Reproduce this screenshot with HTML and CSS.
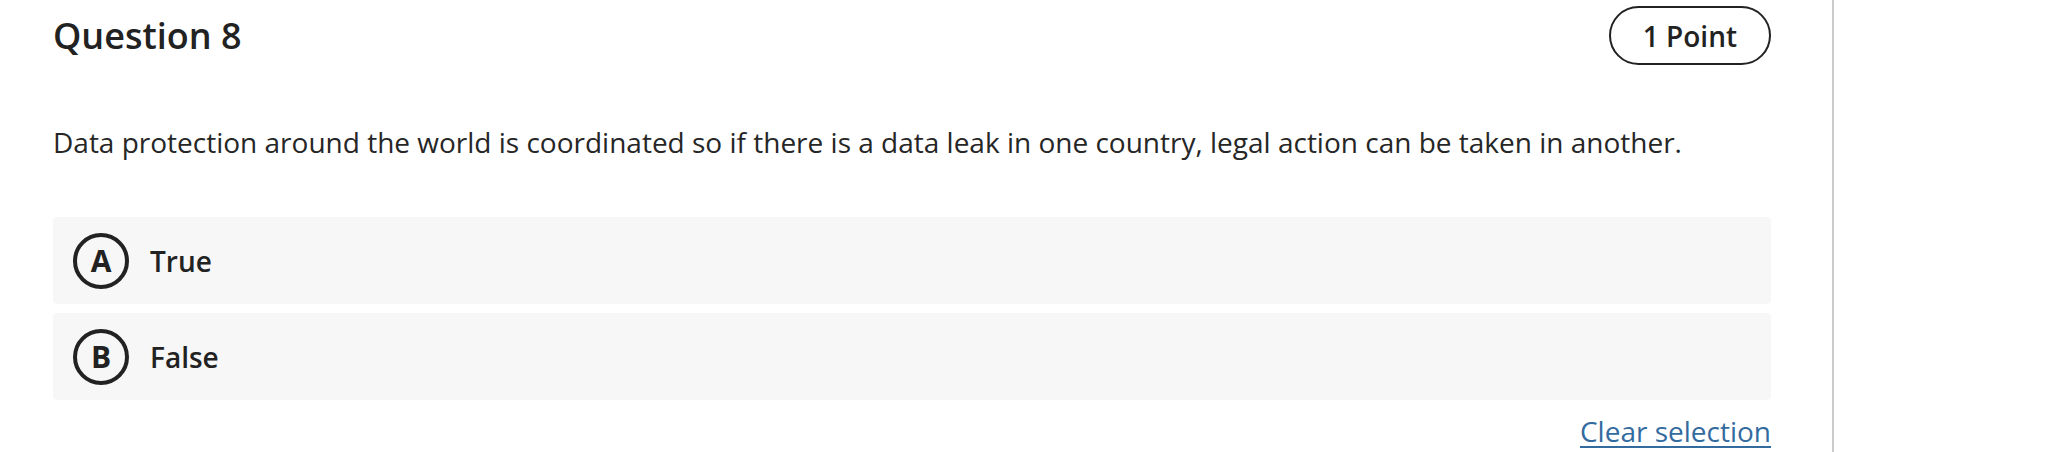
FILE: index.html
```html
<!DOCTYPE html>
<html lang="en">
<head>
<meta charset="utf-8">
<title>Question 8</title>
<link rel="stylesheet" href="styles.css">
</head>
<body>
<div class="page">
  <main class="main">
    <div class="head">
      <h1 class="title">Question 8</h1>
      <span class="points">1 Point</span>
    </div>
    <p class="prompt">Data protection around the world is coordinated so if there is a data leak in one country, legal action can be taken in another.</p>
    <div class="options">
      <div class="option"><span class="letter">A</span><span class="label">True</span></div>
      <div class="option"><span class="letter">B</span><span class="label">False</span></div>
    </div>
    <div class="actions"><a class="clear" href="#">Clear selection</a></div>
  </main>
  <aside class="side"></aside>
</div>
</body>
</html>
```
FILE: styles.css
```css
html, body {
  margin: 0;
  padding: 0;
  background: #fff;
}
body {
  font-family: "Open Sans", "Noto Sans", sans-serif;
  color: #222;
  height: 452px;
  overflow: hidden;
}
.page {
  display: flex;
  height: 452px;
}
.main {
  width: 1718px;
  padding: 6px 61px 0 53px;
  flex: none;
}
.side {
  flex: 1;
  border-left: 2px solid #cccccc;
}
.head {
  display: flex;
  justify-content: space-between;
  align-items: center;
}
.title {
  margin: 0;
  font-size: 36px;
  font-weight: 600;
  line-height: normal;
}
.points {
  box-sizing: border-box;
  height: 59px;
  padding: 0 32px;
  border: 2px solid #222;
  border-radius: 30px;
  font-size: 28px;
  font-weight: 600;
  display: flex;
  align-items: center;
}
.prompt {
  margin: 56px 0 0;
  font-size: 28px;
  line-height: 42px;
  color: #262626;
}
.options {
  margin-top: 54px;
  display: flex;
  flex-direction: column;
  gap: 9px;
}
.option {
  height: 87px;
  background: #f7f7f7;
  border-radius: 4px;
  display: flex;
  align-items: center;
  padding-left: 20px;
  gap: 21px;
}
.letter {
  box-sizing: border-box;
  width: 56px;
  height: 56px;
  border: 4px solid #222;
  border-radius: 50%;
  display: flex;
  align-items: center;
  justify-content: center;
  font-size: 30px;
  font-weight: 700;
  line-height: 1;
}
.label {
  font-size: 28px;
  font-weight: 600;
}
.actions {
  margin-top: 10px;
  display: flex;
  justify-content: flex-end;
}
.clear {
  font-size: 28px;
  line-height: 42px;
  color: #336b9f;
  text-decoration: underline;
  text-decoration-thickness: 2px;
  text-underline-offset: 4px;
}
```
